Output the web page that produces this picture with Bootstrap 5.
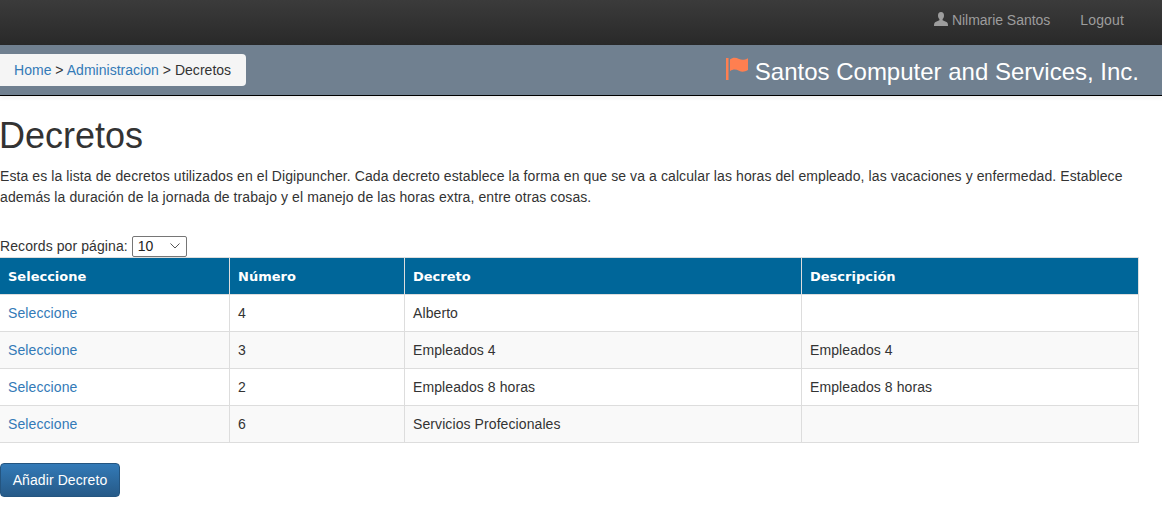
<!DOCTYPE html>
<html lang="es">
<head>
<meta charset="utf-8">
<title>Decretos</title>
<link href="https://cdn.jsdelivr.net/npm/bootstrap@5.3.0/dist/css/bootstrap.min.css" rel="stylesheet">
<style>
body{font-family:"Liberation Sans",Arial,sans-serif;font-size:14px;line-height:1.5;color:#333;background:#fff;height:509px;overflow:hidden}
a{color:#337ab7;text-decoration:none}
.topbar{height:45px;background:linear-gradient(to bottom,#3b3b3b,#292929);padding:0 38px 4px 0;gap:30px}
.topbar a,.topbar span.who{color:#9d9d9d}
.topbar a{letter-spacing:.15px}
.who{letter-spacing:-.03px}
.who svg{width:14px;height:14px;vertical-align:-1px;margin-right:4px}
.subbar{height:51px;background:#708090;border-bottom:1px solid #000;box-shadow:0 2px 4px rgba(0,0,0,.06);padding-right:23px}
.crumbs{background:#f5f5f5;border-radius:0 4px 4px 0;height:32px;margin-top:9px;padding:0 15px 0 14px;line-height:32px;color:#333;letter-spacing:.025px}
.brandname{color:#fff;font-size:24px;line-height:1;margin-top:12px}
.brandname svg{width:24px;height:24px;vertical-align:-1px;margin-right:6px}
.pagebody{padding-right:23px;letter-spacing:.09px}
.pagetitle{font-size:36px;font-weight:500;line-height:1.1;margin:20px 0 10px;color:#333;font-family:"Liberation Sans",Arial,sans-serif;letter-spacing:0;margin-left:-1px}
.intro{line-height:21px;margin:0 -10px 28px 0;color:#333}
.pager-size{height:21px;line-height:21px}
.pager-size select{appearance:none;width:55px;height:21px;font-size:14px;line-height:19px;padding:0 0 0 5px;border:1px solid #767676;border-radius:2px;background:#fff url("data:image/svg+xml,%3Csvg xmlns='http://www.w3.org/2000/svg' width='10' height='6'%3E%3Cpath d='M.5.5 5 5 9.500.5' fill='none' stroke='%23555' stroke-width='1'/%3E%3C/svg%3E") no-repeat right 6px center;color:#222;font-family:inherit;vertical-align:top}
.grid-table{width:1139px;margin-bottom:20px;table-layout:fixed;border-collapse:collapse}
.grid-table th,.grid-table td{border:1px solid #ddd;padding:8px;height:37px;line-height:20px;font-size:14px;font-weight:400;box-shadow:none;vertical-align:middle}
.grid-table th{background:#069;color:#fff;font-family:"DejaVu Sans",Verdana,sans-serif;font-weight:700;font-size:13px;letter-spacing:0;padding:9px 8px 7px}
.grid-table tbody tr:nth-child(even) td{background:#f9f9f9}
.grid-table tr>:first-child{border-left:0}
.add-btn{height:34px;width:120px;padding:1px 0 0;color:#fff;font-size:14px;border:1px solid #245580;border-radius:4px;background:linear-gradient(to bottom,#337ab7,#265a88);font-family:inherit;letter-spacing:.09px}
.add-btn:hover{color:#fff}
</style>
</head>
<body>
<div class="topbar d-flex justify-content-end align-items-center">
  <span class="who"><svg viewBox="0 0 14 14" fill="#9d9d9d"><path d="M7 0C5 0 4 1.500 4 3.400 4 5 4.700 6.300 5.400 7v1.200L1.500 10C.5 10.500 0 11.300 0 14h14c0-2.700-.5-3.500-1.500-4L8.600 8.200V7C9.300 6.300 10 5 10 3.400 10 1.500 9 0 7 0z"/></svg>Nilmarie Santos</span>
  <a href="#">Logout</a>
</div>
<div class="subbar d-flex justify-content-between align-items-start">
  <div class="crumbs"><a href="#">Home</a> &gt; <a href="#">Administracion</a> &gt; Decretos</div>
  <div class="brandname"><svg viewBox="0 0 24 24"><rect x="1" y="1" width="2.500" height="22" fill="#ff7f50"/><path fill="#ff7f50" d="M5 2.500C8 0 11 .5 14 2c3 1.300 5.500 1 9-.8V13c-3.500 2-6 2.200-9 .8-3-1.500-6-1.800-9 .4z"/></svg>Santos Computer and Services, Inc.</div>
</div>
<main class="pagebody">
  <h1 class="pagetitle">Decretos</h1>
  <p class="intro">Esta es la lista de decretos utilizados en el Digipuncher. Cada decreto establece la forma en que se va a calcular las horas del empleado, las vacaciones y enfermedad. Establece además la duración de la jornada de trabajo y el manejo de las horas extra, entre otras cosas.</p>
  <div class="pager-size">Records por página: <select><option>10</option><option>25</option><option>50</option></select></div>
  <table class="grid-table">
    <colgroup><col style="width:229.500px"><col style="width:175px"><col style="width:397px"><col></colgroup>
    <thead><tr><th>Seleccione</th><th>Número</th><th>Decreto</th><th>Descripción</th></tr></thead>
    <tbody>
      <tr><td><a href="#">Seleccione</a></td><td>4</td><td>Alberto</td><td></td></tr>
      <tr><td><a href="#">Seleccione</a></td><td>3</td><td>Empleados 4</td><td>Empleados 4</td></tr>
      <tr><td><a href="#">Seleccione</a></td><td>2</td><td>Empleados 8 horas</td><td>Empleados 8 horas</td></tr>
      <tr><td><a href="#">Seleccione</a></td><td>6</td><td>Servicios Profecionales</td><td></td></tr>
    </tbody>
  </table>
  <button type="button" class="btn add-btn">Añadir Decreto</button>
</main>
<script src="https://cdn.jsdelivr.net/npm/bootstrap@5.3.0/dist/js/bootstrap.bundle.min.js"></script>
</body>
</html>
